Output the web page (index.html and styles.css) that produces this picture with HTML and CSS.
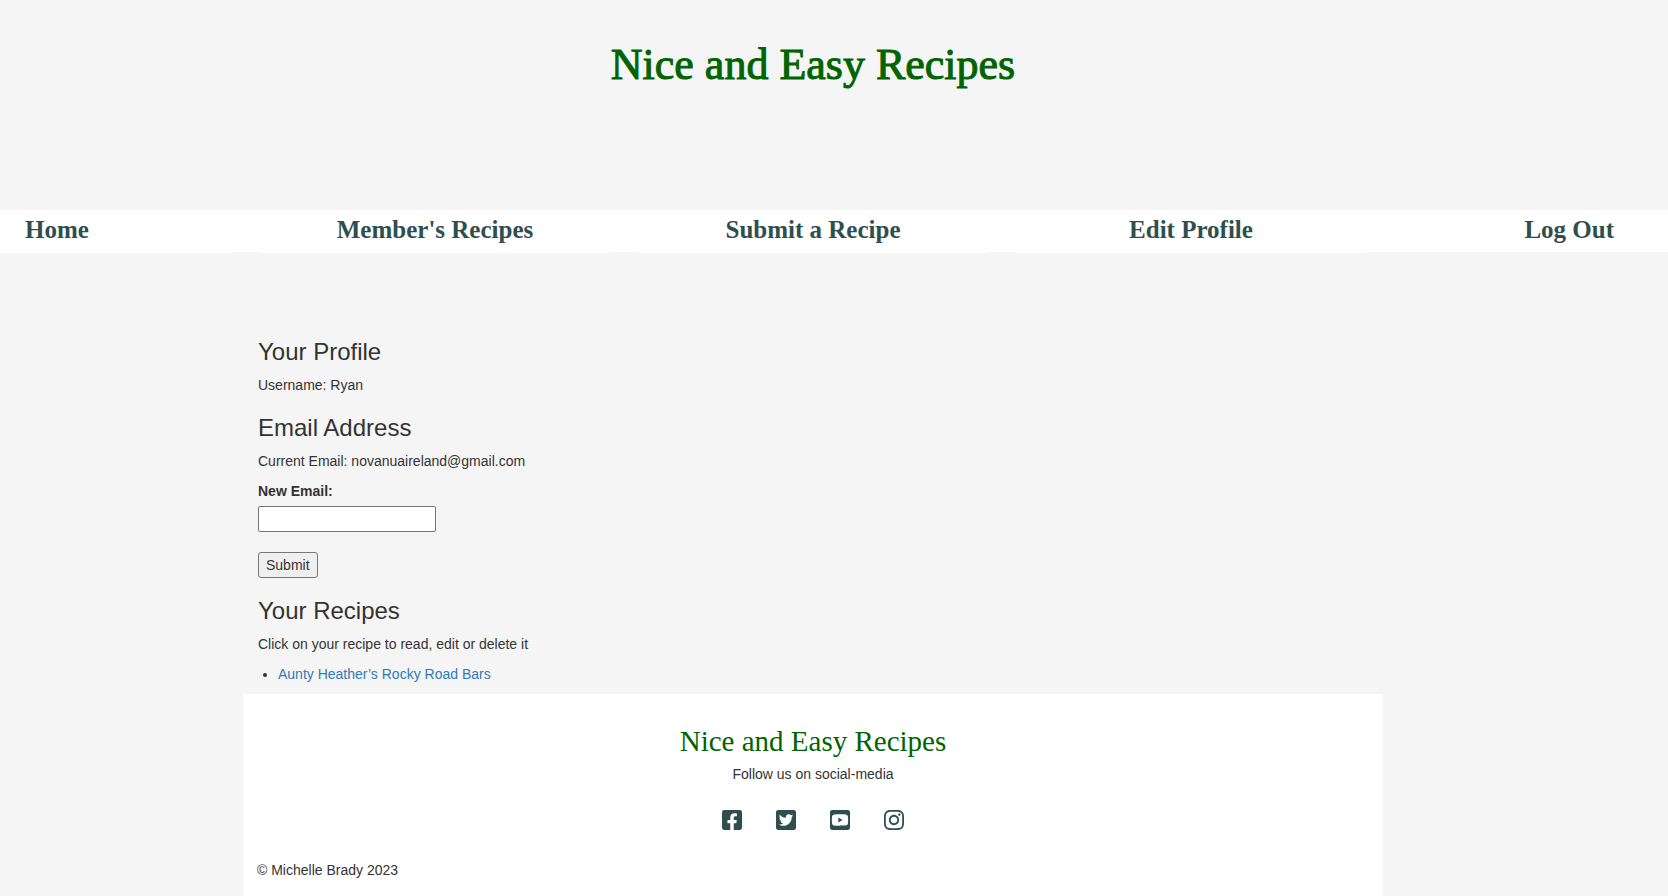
FILE: index.html
```html
<!DOCTYPE html>
<html lang="en">
<head>
<meta charset="utf-8">
<meta name="viewport" content="width=device-width, initial-scale=1">
<title>Nice and Easy Recipes</title>
<link rel="stylesheet" href="styles.css">
</head>
<body>
<header class="site-header">
  <h1 class="site-title">Nice and Easy Recipes</h1>
</header>
<nav class="site-nav">
  <a class="nav-item nav-first" href="#home">Home</a>
  <a class="nav-item" href="#recipes">Member's Recipes</a>
  <a class="nav-item" href="#submit">Submit a Recipe</a>
  <a class="nav-item" href="#profile">Edit Profile</a>
  <a class="nav-item nav-last" href="#logout">Log Out</a>
</nav>
<div class="page">
  <div class="container">
    <main class="content">
      <h3 class="heading">Your Profile</h3>
      <p class="text">Username: Ryan</p>
      <h3 class="heading">Email Address</h3>
      <p class="text">Current Email: novanuaireland@gmail.com</p>
      <form class="email-form">
        <label class="label" for="email">New Email:</label>
        <input class="field" type="email" id="email" name="email">
        <button class="button" type="submit">Submit</button>
      </form>
      <h3 class="heading">Your Recipes</h3>
      <p class="text">Click on your recipe to read, edit or delete it</p>
      <ul class="recipe-list">
        <li><a class="recipe-link" href="#rocky-road">Aunty Heather’s Rocky Road Bars</a></li>
      </ul>
    </main>
    <footer class="footer">
      <h3 class="footer-title">Nice and Easy Recipes</h3>
      <p class="footer-text">Follow us on social-media</p>
      <div class="social">
        <a class="social-link" href="#facebook" aria-label="Facebook"><svg class="icon" viewBox="0 32 448 448"><path d="M400 32H48A48 48 0 0 0 0 80v352a48 48 0 0 0 48 48h137.25V327.69h-63V256h63v-54.64c0-62.15 37-96.48 93.67-96.48 27.14 0 55.52 4.84 55.52 4.84v61h-31.27c-30.81 0-40.42 19.12-40.42 38.73V256h68.78l-11 71.69h-57.78V480H400a48 48 0 0 0 48-48V80a48 48 0 0 0-48-48z"/></svg></a>
        <a class="social-link" href="#twitter" aria-label="Twitter"><svg class="icon" viewBox="0 32 448 448"><path d="M400 32H48C21.5 32 0 53.500 0 80v352c0 26.500 21.500 48 48 48h352c26.500 0 48-21.500 48-48V80c0-26.500-21.500-48-48-48zm-48.900 158.800c.2 2.800.2 5.700.2 8.500 0 86.700-66 186.600-186.600 186.600-37.200 0-71.700-10.800-100.700-29.400 5.300.6 10.400.8 15.800.8 30.700 0 58.900-10.400 81.400-28-28.800-.6-53-19.500-61.300-45.500 10.100 1.500 19.200 1.500 29.600-1.200-30-6.100-52.500-32.500-52.500-64.400v-.8c8.700 4.900 18.900 7.900 29.600 8.300a65.447 65.447 0 0 1-29.200-54.600c0-12.200 3.200-23.400 8.900-33.100 32.300 39.800 80.800 65.800 135.200 68.600-9.300-44.500 24-80.600 64-80.600 18.900 0 35.900 7.900 47.900 20.700 14.800-2.800 29-8.300 41.600-15.800-4.900 15.200-15.200 28-28.800 36.100 13.200-1.400 26-5.100 37.800-10.200-8.900 13.100-20.100 24.700-32.900 34z"/></svg></a>
        <a class="social-link" href="#youtube" aria-label="YouTube"><svg class="icon" viewBox="0 32 448 448"><path d="M186.800 202.100l95.200 54.100-95.200 54.100V202.100zM448 80v352c0 26.500-21.500 48-48 48H48c-26.500 0-48-21.500-48-48V80c0-26.500 21.500-48 48-48h352c26.500 0 48 21.500 48 48zm-42 176.300s0-59.600-7.600-88.200c-4.200-15.800-16.500-28.200-32.200-32.400C337.900 128 224 128 224 128s-113.900 0-142.200 7.700c-15.700 4.200-28 16.600-32.200 32.400-7.600 28.500-7.600 88.200-7.600 88.200s0 59.600 7.600 88.200c4.200 15.800 16.500 27.700 32.200 31.900C110.100 384 224 384 224 384s113.900 0 142.200-7.700c15.700-4.200 28-16.100 32.200-31.900 7.600-28.500 7.600-88.100 7.600-88.100z"/></svg></a>
        <a class="social-link" href="#instagram" aria-label="Instagram"><svg class="icon" viewBox="0 32 448 448"><path d="M224.100 141c-63.600 0-114.900 51.300-114.900 114.900s51.300 114.900 114.900 114.900S339 319.500 339 255.900 287.700 141 224.100 141zm0 189.600c-41.100 0-74.700-33.500-74.700-74.700s33.500-74.700 74.700-74.700 74.700 33.500 74.700 74.700-33.600 74.700-74.700 74.700zm146.400-194.300c0 14.900-12 26.800-26.800 26.800-14.900 0-26.800-12-26.800-26.800s12-26.800 26.800-26.800 26.800 12 26.800 26.800zm76.100 27.200c-1.700-35.900-9.900-67.700-36.200-93.900-26.200-26.200-58-34.400-93.900-36.200-37-2.100-147.900-2.100-184.900 0-35.800 1.700-67.600 9.900-93.900 36.100s-34.400 58-36.200 93.900c-2.100 37-2.100 147.900 0 184.900 1.700 35.900 9.900 67.700 36.200 93.900s58 34.400 93.900 36.200c37 2.100 147.900 2.100 184.900 0 35.900-1.700 67.700-9.900 93.900-36.200 26.200-26.200 34.400-58 36.200-93.900 2.100-37 2.100-147.800 0-184.800zM398.800 388c-7.800 19.600-22.900 34.700-42.600 42.600-29.500 11.700-99.500 9-132.100 9s-102.700 2.600-132.100-9c-19.600-7.800-34.700-22.900-42.600-42.600-11.700-29.500-9-99.500-9-132.100s-2.600-102.700 9-132.100c7.800-19.600 22.900-34.700 42.600-42.600 29.500-11.700 99.500-9 132.100-9s102.700-2.600 132.100 9c19.600 7.800 34.700 22.900 42.600 42.600 11.700 29.500 9 99.500 9 132.100s2.700 102.700-9 132.100z"/></svg></a>
      </div>
      <p class="copyright">© Michelle Brady 2023</p>
    </footer>
  </div>
</div>
</body>
</html>
```
FILE: styles.css
```css
* {
  box-sizing: border-box;
}

body {
  margin: 0;
  min-height: 100vh;
  display: flex;
  flex-direction: column;
  background: #f5f5f5;
  color: #333;
  font: 14px/20px "Liberation Sans", Arial, sans-serif;
}

.site-header {
  padding: 40px 42px 120px 0;
  text-align: center;
}

.site-title {
  margin: 0;
  color: #006400;
  font: 400 44px/50px "Liberation Serif", "Times New Roman", serif;
  -webkit-text-stroke: 1px #006400;
}

.site-nav {
  display: grid;
  grid-template-columns: 232fr 350fr 350fr 350fr 274fr;
  column-gap: 28px;
  height: 42px;
  background: #fff;
}

.nav-item {
  height: 43px;
  background: #fff;
  color: #2f4f4f;
  font: 700 25px/40px "Liberation Serif", "Times New Roman", serif;
  text-align: center;
  text-decoration: none;
  white-space: nowrap;
}

.nav-first {
  padding-left: 25px;
  text-align: left;
}

.nav-last {
  height: 42px;
  padding-right: 54px;
  text-align: right;
}

.page {
  flex: 1;
  display: flex;
  padding: 87px 42px 0 0;
}

.container {
  display: flex;
  flex-direction: column;
  width: 100%;
  max-width: 1140px;
  margin: 0 auto;
}

.content {
  padding: 0 15px;
}

.heading {
  margin: 20px 0 10px;
  font-size: 24px;
  font-weight: 400;
  line-height: 26px;
}

.heading:first-child {
  margin-top: 0;
}

.text {
  margin: 0 0 10px;
}

.email-form {
  display: flex;
  flex-direction: column;
  align-items: flex-start;
}

.label {
  margin-bottom: 5px;
  font-weight: 700;
}

.field {
  width: 178px;
  height: 26px;
  padding: 1px 2px;
  border: 1px solid #767676;
  border-radius: 2px;
  background: #fff;
  color: inherit;
  font: inherit;
}

.button {
  height: 26px;
  margin-top: 20px;
  padding: 1px 7px;
  border: 1px solid #767676;
  border-radius: 3px;
  background: #efefef;
  color: inherit;
  font: inherit;
}

.recipe-list {
  margin: 0 0 10px;
  padding-left: 20px;
}

.recipe-link {
  color: #337ab7;
  text-decoration: none;
}

.footer {
  flex: 1;
  padding: 32px 14px 16px;
  background: #fff;
  text-align: center;
}

.footer-title {
  margin: 0 0 8px;
  color: #006400;
  font: 400 29px/30px "Liberation Serif", "Times New Roman", serif;
}

.footer-text {
  margin: 0 0 26px;
}

.social {
  display: flex;
  justify-content: center;
  gap: 34px;
  margin-bottom: 30px;
}

.social-link {
  display: block;
  width: 20px;
  height: 20px;
}

.icon {
  display: block;
  width: 100%;
  height: 100%;
  fill: #2f4f4f;
}

.copyright {
  margin: 0;
  text-align: left;
}
```
